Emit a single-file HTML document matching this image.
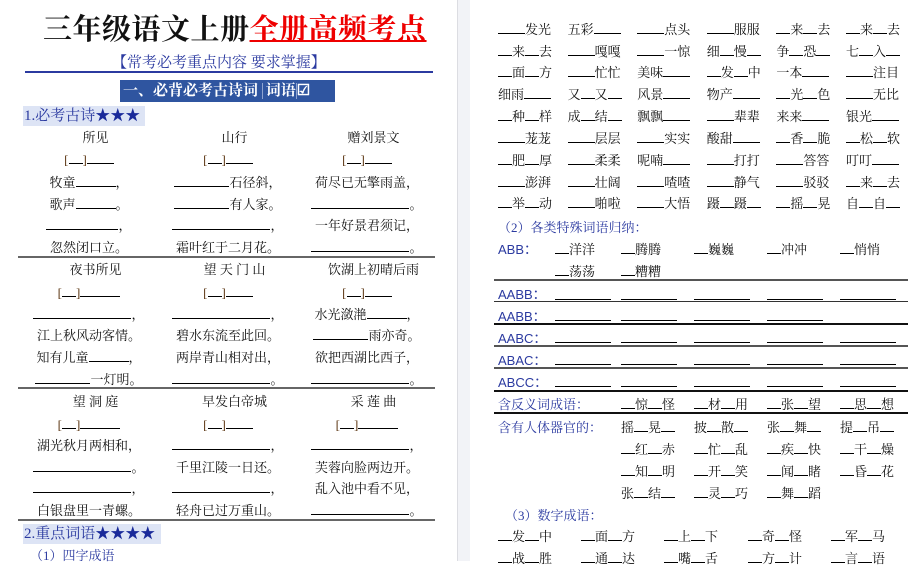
<!DOCTYPE html>
<html><head><meta charset="utf-8"><style>
*{margin:0;padding:0;box-sizing:border-box}
body{width:920px;height:561px;overflow:hidden;background:#fff;position:relative;font-family:"Liberation Serif","Noto Serif CJK SC",serif;color:#111;font-size:13px}
.a{position:absolute;white-space:nowrap;line-height:16px}
b{display:inline-block;border-bottom:1px solid #000;height:12px;vertical-align:baseline;font-weight:normal}
.L{width:27px}.S{width:14px}.M{width:40px}.F{width:98px}.H{width:55px}
.c{position:absolute;width:140px;text-align:center;line-height:16px;white-space:nowrap}
.k{color:#5a3410}
.sep{position:absolute;left:18px;width:417px;height:2px;background:#666}
.g{position:absolute;left:498px;line-height:16px;white-space:nowrap;display:flex}
.g span{display:inline-block;width:69.6px}
.blue{color:#2b3aa0}
.rl{position:absolute;left:494px;width:414px;height:2px;background:#555}
.lab{font-family:"Liberation Sans","Noto Sans CJK SC",sans-serif;color:#2b3aa0;font-size:13px}
.bl{position:absolute;width:56px;height:1px;background:#000}
</style></head><body>
<div style="position:absolute;left:457px;top:0;width:13px;height:561px;background:#f2f3f7;border-left:1px solid #dcdde2"></div>

<div class="a" style="left:43px;top:14px;line-height:32px;font-size:29px;font-weight:bold;letter-spacing:0.5px">三年级语文上册<span style="color:#e00;text-decoration:underline;text-decoration-thickness:2px">全册高频考点</span></div>
<div class="a" style="left:112px;top:54px;font-size:15px;line-height:18px;color:#2b3aa0">【常考必考重点内容 要求掌握】</div>
<div style="position:absolute;left:25px;top:71px;width:408px;height:2px;background:#2b3aa0"></div>
<div class="a" style="left:120px;top:80px;width:215px;height:22px;background:#2f55a0;color:#fff;font-weight:bold;font-size:15px;line-height:22px;padding-left:3px">一、必背必考古诗词 <span style="border-left:1px solid #8ea3d0;padding-left:3px">词语</span><span style="border-left:1px solid #8ea3d0">☑</span></div>
<div class="a" style="left:23px;top:106px;width:122px;height:20px;background:#dde4f5;color:#2b3aa0;font-size:15px;line-height:20px;padding-left:1px">1.必考古诗<span style="color:#1a2a9a">★★★</span></div>

<div class="c" style="left:19px;top:130px">　所见</div>
<div class="c" style="left:158px;top:130px">　山行</div>
<div class="c" style="left:297px;top:130px">　赠刘景文</div>
<div class="c" style="left:19px;top:152px"><span class="k">[</span><b class="S"></b><span class="k">]</span><b class="L"></b></div>
<div class="c" style="left:158px;top:152px"><span class="k">[</span><b class="S"></b><span class="k">]</span><b class="L"></b></div>
<div class="c" style="left:297px;top:152px"><span class="k">[</span><b class="S"></b><span class="k">]</span><b class="L"></b></div>
<div class="c" style="left:19px;top:175px">牧童<b class="M"></b>，</div>
<div class="c" style="left:158px;top:175px"><b class="H"></b>石径斜，</div>
<div class="c" style="left:297px;top:175px">荷尽已无擎雨盖，</div>
<div class="c" style="left:19px;top:197px">歌声<b class="M"></b>。</div>
<div class="c" style="left:158px;top:197px"><b class="H"></b>有人家。</div>
<div class="c" style="left:297px;top:197px"><b class="F"></b>。</div>
<div class="c" style="left:19px;top:218px"><b style="width:72px"></b>，</div>
<div class="c" style="left:158px;top:218px"><b class="F"></b>，</div>
<div class="c" style="left:297px;top:218px">一年好景君须记，</div>
<div class="c" style="left:19px;top:240px">忽然闭口立。</div>
<div class="c" style="left:158px;top:240px">霜叶红于二月花。</div>
<div class="c" style="left:297px;top:240px"><b class="F"></b>。</div>
<div class="sep" style="top:256px"></div>

<div class="c" style="left:19px;top:262px">　夜书所见</div>
<div class="c" style="left:158px;top:262px">　望 天 门 山</div>
<div class="c" style="left:297px;top:262px">　饮湖上初晴后雨</div>
<div class="c" style="left:19px;top:285px"><span class="k">[</span><b class="S"></b><span class="k">]</span><b class="M"></b></div>
<div class="c" style="left:158px;top:285px"><span class="k">[</span><b class="S"></b><span class="k">]</span><b class="L"></b></div>
<div class="c" style="left:297px;top:285px"><span class="k">[</span><b class="S"></b><span class="k">]</span><b class="L"></b></div>
<div class="c" style="left:19px;top:307px"><b class="F"></b>，</div>
<div class="c" style="left:158px;top:307px"><b class="F"></b>，</div>
<div class="c" style="left:297px;top:307px">水光潋滟<b class="M"></b>，</div>
<div class="c" style="left:19px;top:328px">江上秋风动客情。</div>
<div class="c" style="left:158px;top:328px">碧水东流至此回。</div>
<div class="c" style="left:297px;top:328px"><b class="H"></b>雨亦奇。</div>
<div class="c" style="left:19px;top:350px">知有儿童<b class="M"></b>，</div>
<div class="c" style="left:158px;top:350px">两岸青山相对出，</div>
<div class="c" style="left:297px;top:350px">欲把西湖比西子，</div>
<div class="c" style="left:19px;top:372px"><b class="H"></b>一灯明。</div>
<div class="c" style="left:158px;top:372px"><b class="F"></b>。</div>
<div class="c" style="left:297px;top:372px"><b class="F"></b>。</div>
<div class="sep" style="top:387px"></div>

<div class="c" style="left:19px;top:394px">　望 洞 庭</div>
<div class="c" style="left:158px;top:394px">　早发白帝城</div>
<div class="c" style="left:297px;top:394px">　采 莲 曲</div>
<div class="c" style="left:19px;top:417px"><span class="k">[</span><b class="S"></b><span class="k">]</span><b class="M"></b></div>
<div class="c" style="left:158px;top:417px"><span class="k">[</span><b class="S"></b><span class="k">]</span><b class="L"></b></div>
<div class="c" style="left:297px;top:417px"><span class="k">[</span><b class="S"></b><span class="k">]</span><b class="M"></b></div>
<div class="c" style="left:19px;top:438px">湖光秋月两相和，</div>
<div class="c" style="left:158px;top:438px"><b class="F"></b>，</div>
<div class="c" style="left:297px;top:438px"><b class="F"></b>，</div>
<div class="c" style="left:19px;top:460px"><b class="F"></b>。</div>
<div class="c" style="left:158px;top:460px">千里江陵一日还。</div>
<div class="c" style="left:297px;top:460px">芙蓉向脸两边开。</div>
<div class="c" style="left:19px;top:481px"><b class="F"></b>，</div>
<div class="c" style="left:158px;top:481px"><b class="F"></b>，</div>
<div class="c" style="left:297px;top:481px">乱入池中看不见，</div>
<div class="c" style="left:19px;top:503px">白银盘里一青螺。</div>
<div class="c" style="left:158px;top:503px">轻舟已过万重山。</div>
<div class="c" style="left:297px;top:503px"><b class="F"></b>。</div>
<div class="sep" style="top:519px"></div>

<div class="a" style="left:23px;top:524px;width:138px;height:20px;background:#dde4f5;color:#2b3aa0;font-size:15px;line-height:20px;padding-left:1px">2.重点词语<span style="color:#1a2a9a">★★★★</span></div>
<div class="a blue" style="left:30px;top:548px">（1）四字成语</div>

<div class="g" style="top:22px"><span><b class="L"></b>发光</span><span>五彩<b class="L"></b></span><span><b class="L"></b>点头</span><span><b class="L"></b>服服</span><span><b class="S"></b>来<b class="S"></b>去</span><span><b class="S"></b>来<b class="S"></b>去</span></div>
<div class="g" style="top:44px"><span><b class="S"></b>来<b class="S"></b>去</span><span><b class="L"></b>嘎嘎</span><span><b class="L"></b>一惊</span><span>细<b class="S"></b>慢<b class="S"></b></span><span>争<b class="S"></b>恐<b class="S"></b></span><span>七<b class="S"></b>入<b class="S"></b></span></div>
<div class="g" style="top:65px"><span><b class="S"></b>面<b class="S"></b>方</span><span><b class="L"></b>忙忙</span><span>美味<b class="L"></b></span><span><b class="S"></b>发<b class="S"></b>中</span><span>一本<b class="L"></b></span><span><b class="L"></b>注目</span></div>
<div class="g" style="top:87px"><span>细雨<b class="L"></b></span><span>又<b class="S"></b>又<b class="S"></b></span><span>风景<b class="L"></b></span><span>物产<b class="L"></b></span><span><b class="S"></b>光<b class="S"></b>色</span><span><b class="L"></b>无比</span></div>
<div class="g" style="top:109px"><span><b class="S"></b>种<b class="S"></b>样</span><span>成<b class="S"></b>结<b class="S"></b></span><span>飘飘<b class="L"></b></span><span><b class="L"></b>辈辈</span><span>来来<b class="L"></b></span><span>银光<b class="L"></b></span></div>
<div class="g" style="top:131px"><span><b class="L"></b>茏茏</span><span><b class="L"></b>层层</span><span><b class="L"></b>实实</span><span>酸甜<b class="L"></b></span><span><b class="S"></b>香<b class="S"></b>脆</span><span><b class="S"></b>松<b class="S"></b>软</span></div>
<div class="g" style="top:153px"><span><b class="S"></b>肥<b class="S"></b>厚</span><span><b class="L"></b>柔柔</span><span>呢喃<b class="L"></b></span><span><b class="L"></b>打打</span><span><b class="L"></b>答答</span><span>叮叮<b class="L"></b></span></div>
<div class="g" style="top:175px"><span><b class="L"></b>澎湃</span><span><b class="L"></b>壮阔</span><span><b class="L"></b>喳喳</span><span><b class="L"></b>静气</span><span><b class="L"></b>驳驳</span><span><b class="S"></b>来<b class="S"></b>去</span></div>
<div class="g" style="top:196px"><span><b class="S"></b>举<b class="S"></b>动</span><span><b class="L"></b>啪啦</span><span><b class="L"></b>大悟</span><span>蹑<b class="S"></b>蹑<b class="S"></b></span><span><b class="S"></b>摇<b class="S"></b>晃</span><span>自<b class="S"></b>自<b class="S"></b></span></div>

<div class="a blue" style="left:498px;top:220px">（2）各类特殊词语归纳：</div>
<div class="a lab" style="left:498px;top:242px">ABB：</div>
<div class="a" style="left:555px;top:242px"><b class="S"></b>洋洋</div>
<div class="a" style="left:621px;top:242px"><b class="S"></b>腾腾</div>
<div class="a" style="left:694px;top:242px"><b class="S"></b>巍巍</div>
<div class="a" style="left:767px;top:242px"><b class="S"></b>冲冲</div>
<div class="a" style="left:840px;top:242px"><b class="S"></b>悄悄</div>
<div class="a" style="left:555px;top:264px"><b class="S"></b>荡荡</div>
<div class="a" style="left:621px;top:264px"><b class="S"></b>糟糟</div>
<div class="rl" style="top:279px"></div>

<div class="a lab" style="left:498px;top:287px">AABB：</div>
<div class="bl" style="left:555px;top:299px"></div><div class="bl" style="left:621px;top:299px"></div><div class="bl" style="left:694px;top:299px"></div><div class="bl" style="left:767px;top:299px"></div><div class="bl" style="left:840px;top:299px"></div>
<div class="rl" style="top:301px;height:1px;background:#333"></div>
<div class="a lab" style="left:498px;top:309px">AABB：</div>
<div class="bl" style="left:555px;top:320px"></div><div class="bl" style="left:621px;top:320px"></div><div class="bl" style="left:694px;top:320px"></div><div class="bl" style="left:767px;top:320px"></div>
<div class="rl" style="top:323px;background:#111"></div>
<div class="a lab" style="left:498px;top:331px">AABC：</div>
<div class="bl" style="left:555px;top:342px"></div><div class="bl" style="left:621px;top:342px"></div><div class="bl" style="left:694px;top:342px"></div><div class="bl" style="left:767px;top:342px"></div><div class="bl" style="left:840px;top:342px"></div>
<div class="rl" style="top:345px"></div>
<div class="a lab" style="left:498px;top:353px">ABAC：</div>
<div class="bl" style="left:555px;top:364px"></div><div class="bl" style="left:621px;top:364px"></div><div class="bl" style="left:694px;top:364px"></div><div class="bl" style="left:767px;top:364px"></div><div class="bl" style="left:840px;top:364px"></div>
<div class="rl" style="top:367px"></div>
<div class="a lab" style="left:498px;top:375px">ABCC：</div>
<div class="bl" style="left:555px;top:386px"></div><div class="bl" style="left:621px;top:386px"></div><div class="bl" style="left:694px;top:386px"></div><div class="bl" style="left:767px;top:386px"></div><div class="bl" style="left:840px;top:386px"></div>
<div class="rl" style="top:390px;background:#111"></div>

<div class="a blue" style="left:498px;top:397px">含反义词成语：</div>
<div class="a" style="left:621px;top:397px"><b class="S"></b>惊<b class="S"></b>怪</div>
<div class="a" style="left:694px;top:397px"><b class="S"></b>材<b class="S"></b>用</div>
<div class="a" style="left:767px;top:397px"><b class="S"></b>张<b class="S"></b>望</div>
<div class="a" style="left:840px;top:397px"><b class="S"></b>思<b class="S"></b>想</div>
<div class="rl" style="top:412px;background:#111"></div>

<div class="a blue" style="left:498px;top:420px">含有人体器官的：</div>
<div class="a" style="left:621px;top:420px">摇<b class="S"></b>晃<b class="S"></b></div>
<div class="a" style="left:694px;top:420px">披<b class="S"></b>散<b class="S"></b></div>
<div class="a" style="left:767px;top:420px">张<b class="S"></b>舞<b class="S"></b></div>
<div class="a" style="left:840px;top:420px">提<b class="S"></b>吊<b class="S"></b></div>
<div class="a" style="left:621px;top:442px"><b class="S"></b>红<b class="S"></b>赤</div>
<div class="a" style="left:694px;top:442px"><b class="S"></b>忙<b class="S"></b>乱</div>
<div class="a" style="left:767px;top:442px"><b class="S"></b>疾<b class="S"></b>快</div>
<div class="a" style="left:840px;top:442px"><b class="S"></b>干<b class="S"></b>燥</div>
<div class="a" style="left:621px;top:464px"><b class="S"></b>知<b class="S"></b>明</div>
<div class="a" style="left:694px;top:464px"><b class="S"></b>开<b class="S"></b>笑</div>
<div class="a" style="left:767px;top:464px"><b class="S"></b>闻<b class="S"></b>睹</div>
<div class="a" style="left:840px;top:464px"><b class="S"></b>昏<b class="S"></b>花</div>
<div class="a" style="left:621px;top:486px">张<b class="S"></b>结<b class="S"></b></div>
<div class="a" style="left:694px;top:486px"><b class="S"></b>灵<b class="S"></b>巧</div>
<div class="a" style="left:767px;top:486px"><b class="S"></b>舞<b class="S"></b>蹈</div>

<div class="a blue" style="left:505px;top:508px">（3）数字成语：</div>
<div class="a" style="left:498px;top:529px"><b class="S"></b>发<b class="S"></b>中</div>
<div class="a" style="left:581px;top:529px"><b class="S"></b>面<b class="S"></b>方</div>
<div class="a" style="left:664px;top:529px"><b class="S"></b>上<b class="S"></b>下</div>
<div class="a" style="left:748px;top:529px"><b class="S"></b>奇<b class="S"></b>怪</div>
<div class="a" style="left:831px;top:529px"><b class="S"></b>军<b class="S"></b>马</div>
<div class="a" style="left:498px;top:551px"><b class="S"></b>战<b class="S"></b>胜</div>
<div class="a" style="left:581px;top:551px"><b class="S"></b>通<b class="S"></b>达</div>
<div class="a" style="left:664px;top:551px"><b class="S"></b>嘴<b class="S"></b>舌</div>
<div class="a" style="left:748px;top:551px"><b class="S"></b>方<b class="S"></b>计</div>
<div class="a" style="left:831px;top:551px"><b class="S"></b>言<b class="S"></b>语</div>
</body></html>
